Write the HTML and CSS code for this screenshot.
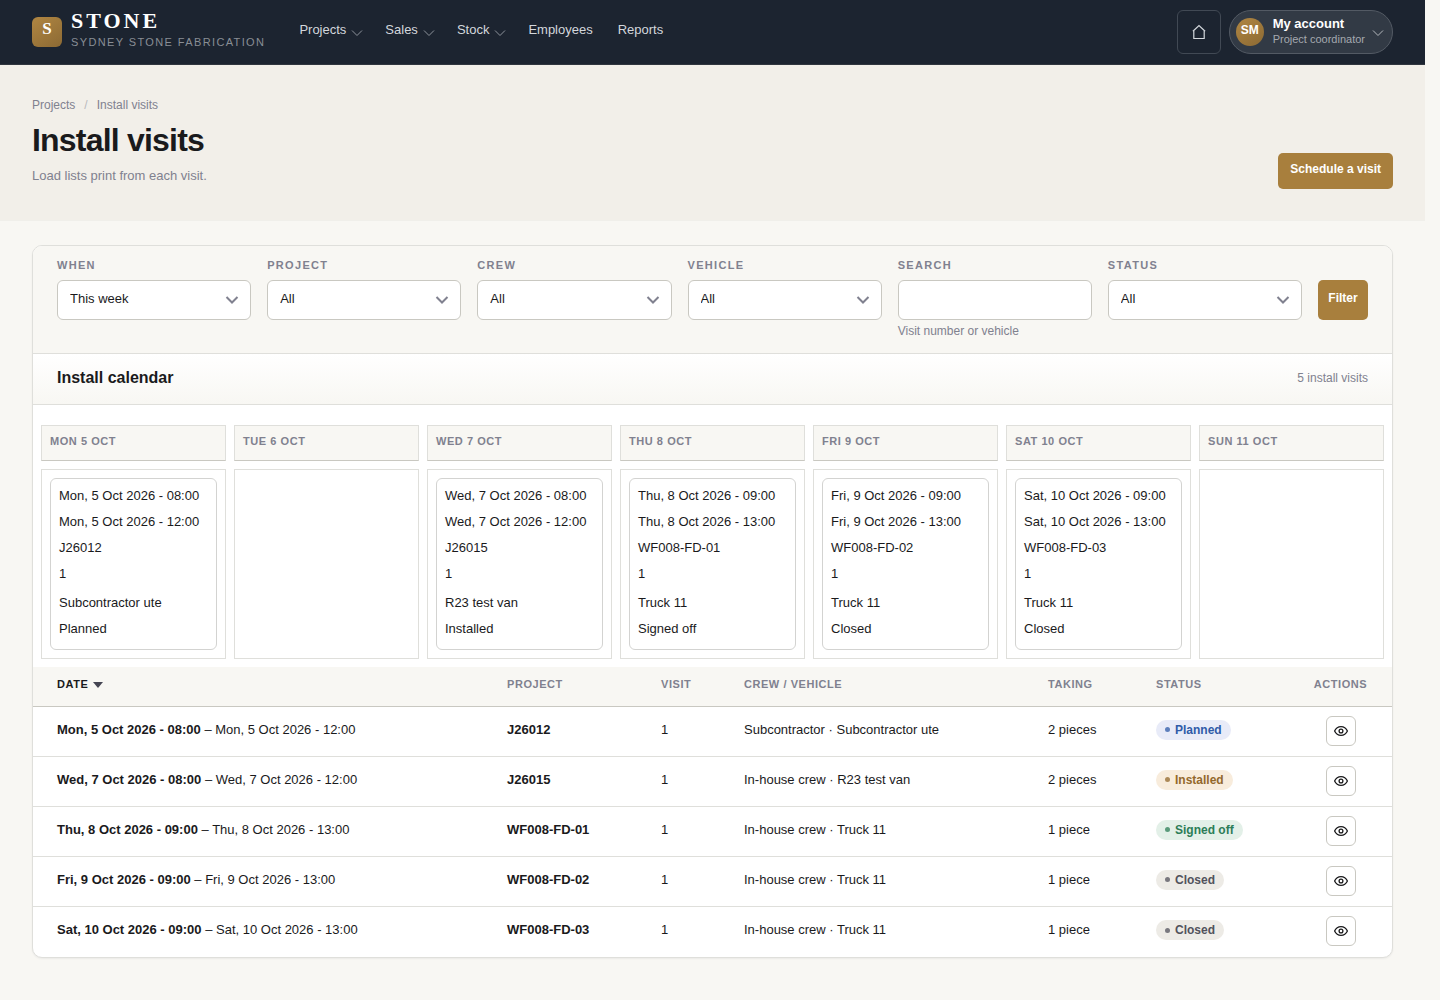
FILE: index.html
```html
<!DOCTYPE html>
<html lang="en">
<head>
<meta charset="utf-8">
<meta name="viewport" content="width=device-width, initial-scale=1">
<title>Install visits</title>
<link rel="stylesheet" href="styles.css">
</head>
<body>
<svg class="sprite" aria-hidden="true">
  <symbol id="chevron" viewBox="0 0 12 12"><path d="M1 3.5l5 5 5-5"/></symbol>
  <symbol id="home" viewBox="0 0 16 16"><path d="M2.8 6.200v8.300h10.400V6.200M1.900 7.300L8 1.600l6.100 5.700"/></symbol>
  <symbol id="eye" viewBox="0 0 16 16"><path d="M1.600 8s2-4.300 6.400-4.300S14.400 8 14.400 8s-2 4.300-6.400 4.300S1.600 8 1.600 8z"/><circle cx="8" cy="8" r="1.900"/></symbol>
</svg>

<header class="topbar">
  <a class="brand" href="#">
    <span class="brand-mark">S</span>
    <span class="brand-text">
      <span class="brand-name">STONE</span>
      <span class="brand-tag">SYDNEY STONE FABRICATION</span>
    </span>
  </a>
  <nav class="nav" aria-label="Main">
    <button class="nav-item nav-menu" type="button">Projects<svg class="nav-chevron"><use href="#chevron"/></svg></button>
    <button class="nav-item nav-menu" type="button">Sales<svg class="nav-chevron"><use href="#chevron"/></svg></button>
    <button class="nav-item nav-menu" type="button">Stock<svg class="nav-chevron"><use href="#chevron"/></svg></button>
    <a class="nav-item" href="#">Employees</a>
    <a class="nav-item" href="#">Reports</a>
  </nav>
  <div class="topbar-end">
    <a class="home" href="#" aria-label="Home"><svg class="home-icon"><use href="#home"/></svg></a>
    <button class="account" type="button">
      <span class="avatar">SM</span>
      <span class="account-text">
        <span class="account-name">My account</span>
        <span class="account-role">Project coordinator</span>
      </span>
      <svg class="account-chevron"><use href="#chevron"/></svg>
    </button>
  </div>
</header>

<section class="hero">
  <div>
    <nav class="crumbs" aria-label="Breadcrumb"><a href="#">Projects</a><span class="crumb-sep">/</span><span>Install visits</span></nav>
    <h1 class="title">Install visits</h1>
    <p class="subtitle">Load lists print from each visit.</p>
  </div>
  <button class="btn btn-hero" type="button">Schedule a visit</button>
</section>

<main class="main">
  <div class="card">
    <form class="filters">
      <div class="field">
        <label class="label" for="when">When</label>
        <select class="control select" id="when"><option>This week</option></select>
      </div>
      <div class="field">
        <label class="label" for="project">Project</label>
        <select class="control select" id="project"><option>All</option></select>
      </div>
      <div class="field">
        <label class="label" for="crew">Crew</label>
        <select class="control select" id="crew"><option>All</option></select>
      </div>
      <div class="field">
        <label class="label" for="vehicle">Vehicle</label>
        <select class="control select" id="vehicle"><option>All</option></select>
      </div>
      <div class="field">
        <label class="label" for="search">Search</label>
        <input class="control" id="search" type="text" aria-describedby="search-help">
        <small class="help" id="search-help">Visit number or vehicle</small>
      </div>
      <div class="field">
        <label class="label" for="status">Status</label>
        <select class="control select" id="status"><option>All</option></select>
      </div>
      <button class="btn btn-filter" type="button">Filter</button>
    </form>

    <div class="section-head">
      <h2 class="section-title">Install calendar</h2>
      <span class="section-count">5 install visits</span>
    </div>

    <table class="calendar">
      <thead>
        <tr><th>Mon 5 Oct</th><th>Tue 6 Oct</th><th>Wed 7 Oct</th><th>Thu 8 Oct</th><th>Fri 9 Oct</th><th>Sat 10 Oct</th><th>Sun 11 Oct</th></tr>
      </thead>
      <tbody>
        <tr>
          <td><a class="event" href="#"><span>Mon, 5 Oct 2026 - 08:00</span><span>Mon, 5 Oct 2026 - 12:00</span><span>J26012</span><span>1</span><span class="event-vehicle">Subcontractor ute</span><span>Planned</span></a></td>
          <td></td>
          <td><a class="event" href="#"><span>Wed, 7 Oct 2026 - 08:00</span><span>Wed, 7 Oct 2026 - 12:00</span><span>J26015</span><span>1</span><span class="event-vehicle">R23 test van</span><span>Installed</span></a></td>
          <td><a class="event" href="#"><span>Thu, 8 Oct 2026 - 09:00</span><span>Thu, 8 Oct 2026 - 13:00</span><span>WF008-FD-01</span><span>1</span><span class="event-vehicle">Truck 11</span><span>Signed off</span></a></td>
          <td><a class="event" href="#"><span>Fri, 9 Oct 2026 - 09:00</span><span>Fri, 9 Oct 2026 - 13:00</span><span>WF008-FD-02</span><span>1</span><span class="event-vehicle">Truck 11</span><span>Closed</span></a></td>
          <td><a class="event" href="#"><span>Sat, 10 Oct 2026 - 09:00</span><span>Sat, 10 Oct 2026 - 13:00</span><span>WF008-FD-03</span><span>1</span><span class="event-vehicle">Truck 11</span><span>Closed</span></a></td>
          <td></td>
        </tr>
      </tbody>
    </table>

    <table class="visits">
      <colgroup><col class="c-date"><col class="c-project"><col class="c-visit"><col class="c-crew"><col class="c-taking"><col class="c-status"><col class="c-actions"></colgroup>
      <thead>
        <tr><th class="sorted" aria-sort="descending">Date<span class="sort-arrow"></span></th><th>Project</th><th>Visit</th><th>Crew / vehicle</th><th>Taking</th><th>Status</th><th class="actions">Actions</th></tr>
      </thead>
      <tbody>
        <tr><td><b>Mon, 5 Oct 2026 - 08:00</b> – Mon, 5 Oct 2026 - 12:00</td><td><b>J26012</b></td><td>1</td><td>Subcontractor · Subcontractor ute</td><td>2 pieces</td><td><span class="pill pill-planned">Planned</span></td><td class="actions"><button class="view" type="button" aria-label="View visit"><svg class="view-icon"><use href="#eye"/></svg></button></td></tr>
        <tr><td><b>Wed, 7 Oct 2026 - 08:00</b> – Wed, 7 Oct 2026 - 12:00</td><td><b>J26015</b></td><td>1</td><td>In-house crew · R23 test van</td><td>2 pieces</td><td><span class="pill pill-installed">Installed</span></td><td class="actions"><button class="view" type="button" aria-label="View visit"><svg class="view-icon"><use href="#eye"/></svg></button></td></tr>
        <tr><td><b>Thu, 8 Oct 2026 - 09:00</b> – Thu, 8 Oct 2026 - 13:00</td><td><b>WF008-FD-01</b></td><td>1</td><td>In-house crew · Truck 11</td><td>1 piece</td><td><span class="pill pill-signed">Signed off</span></td><td class="actions"><button class="view" type="button" aria-label="View visit"><svg class="view-icon"><use href="#eye"/></svg></button></td></tr>
        <tr><td><b>Fri, 9 Oct 2026 - 09:00</b> – Fri, 9 Oct 2026 - 13:00</td><td><b>WF008-FD-02</b></td><td>1</td><td>In-house crew · Truck 11</td><td>1 piece</td><td><span class="pill pill-closed">Closed</span></td><td class="actions"><button class="view" type="button" aria-label="View visit"><svg class="view-icon"><use href="#eye"/></svg></button></td></tr>
        <tr><td><b>Sat, 10 Oct 2026 - 09:00</b> – Sat, 10 Oct 2026 - 13:00</td><td><b>WF008-FD-03</b></td><td>1</td><td>In-house crew · Truck 11</td><td>1 piece</td><td><span class="pill pill-closed">Closed</span></td><td class="actions"><button class="view" type="button" aria-label="View visit"><svg class="view-icon"><use href="#eye"/></svg></button></td></tr>
      </tbody>
    </table>
  </div>
</main>
</body>
</html>
```
FILE: styles.css
```css
:root {
  --navy: #1c2430;
  --gold: #a87f3d;
  --paper: #f8f7f3;
  --sand: #f2efe9;
  --ink: #1a1a1c;
  --muted: #80818f;
  --line: #dfdfdb;
  --line-strong: #c9c8c1;
}

* { box-sizing: border-box; }

body {
  margin: 0;
  padding-right: 15px;
  background: var(--paper);
  color: var(--ink);
  font-family: "Liberation Sans", Arial, sans-serif;
  font-size: 13px;
  line-height: 20px;
}

a { color: inherit; text-decoration: none; }
button, input, select { font: inherit; color: inherit; }
svg { fill: none; stroke: currentColor; }
.sprite { display: none; }

/* Top bar */
.topbar {
  display: flex;
  align-items: center;
  height: 65px;
  padding: 0 32px;
  background: var(--navy);
  border-bottom: 1px solid #30363f;
  color: #d3d7dc;
}
.brand { display: flex; align-items: center; gap: 9px; margin-right: 34px; }
.brand-mark {
  width: 30px;
  height: 30px;
  border-radius: 6px;
  background: linear-gradient(145deg, #b08642, #8c6a34);
  color: #fff;
  font: bold 17px/24px "Liberation Serif", serif;
  text-align: center;
}
.brand-text { display: flex; flex-direction: column; padding-bottom: 4px; }
.brand-name { color: #fff; font: bold 22px/24px "Liberation Serif", serif; letter-spacing: 3px; }
.brand-tag { color: #898e95; font-size: 11px; line-height: 18px; letter-spacing: 0.125em; }
.nav { display: flex; gap: 25px; padding-bottom: 5px; }
.nav-item {
  display: flex;
  align-items: center;
  gap: 5px;
  padding: 0;
  border: 0;
  background: none;
}
.nav-menu { margin-right: -3px; }
.nav-chevron { width: 12px; height: 12px; margin-top: 6px; stroke: #8d939b; }
.topbar-end { display: flex; gap: 8px; margin-left: auto; }
.home {
  display: grid;
  place-items: center;
  width: 44px;
  height: 44px;
  border: 1px solid #414954;
  border-radius: 6px;
}
.home-icon { width: 16px; height: 16px; stroke-width: 1.2; }
.account {
  display: flex;
  align-items: center;
  height: 44px;
  padding: 0 8px 0 6px;
  border: 1px solid #535a64;
  border-radius: 22px;
  background: #323a45;
  text-align: left;
}
.avatar {
  width: 28px;
  height: 28px;
  margin-right: 9px;
  border-radius: 50%;
  background: linear-gradient(145deg, #b08642, #8c6a34);
  color: #fff;
  font-size: 12px;
  font-weight: bold;
  line-height: 25px;
  text-align: center;
}
.account-text { display: flex; flex-direction: column; padding-bottom: 3px; }
.account-name { color: #fff; font-weight: bold; line-height: 16px; }
.account-role { color: #a5a9af; font-size: 11px; line-height: 14px; }
.account-chevron { width: 12px; height: 12px; margin: 2px 0 0 7px; stroke: #b4b8bd; }

/* Page heading */
.hero {
  display: flex;
  align-items: flex-end;
  justify-content: space-between;
  padding: 32px 32px 31px;
  background: var(--sand);
  border-bottom: 1px solid #f0efea;
}
.crumbs { display: flex; gap: 9px; color: var(--muted); font-size: 12px; line-height: 16px; }
.crumb-sep { color: #b9b9bd; }
.title { margin: 7px 0 0; font-size: 32px; line-height: 40px; letter-spacing: -0.025em; }
.subtitle { margin: 6px 0 3px; color: var(--muted); }

.btn {
  border: 0;
  border-radius: 5px;
  background: var(--gold);
  color: #fff;
  font-size: 12px;
  font-weight: bold;
  line-height: 16px;
}
.btn-hero { height: 36px; padding: 0 12px 4px; }

/* Card and filters */
.main { padding: 24px 32px; }
.card {
  overflow: hidden;
  border: 1px solid var(--line);
  border-radius: 10px;
  background: #fff;
  box-shadow: 0 1px 2px rgba(28, 36, 48, 0.06);
}
.filters {
  display: flex;
  align-items: flex-start;
  gap: 16px;
  padding: 12px 24px 14px;
  background: var(--paper);
  border-bottom: 1px solid var(--line);
}
.field { flex: 1; min-width: 0; display: flex; flex-direction: column; }
.label {
  margin-bottom: 8px;
  color: var(--muted);
  font-size: 11px;
  font-weight: bold;
  line-height: 14px;
  letter-spacing: 0.12em;
  text-transform: uppercase;
}
.control {
  width: 100%;
  height: 40px;
  padding: 0 12px 2px;
  border: 1px solid var(--line-strong);
  border-radius: 6px;
  background: #fff;
}
.select {
  appearance: none;
  background: #fff url("data:image/svg+xml,%3Csvg xmlns='http://www.w3.org/2000/svg' viewBox='0 0 14 14' fill='none' stroke='%2380818f' stroke-width='2'%3E%3Cpath d='M1.500 4L7 9.500l5.500-5.500'/%3E%3C/svg%3E") right 11px center / 14px 14px no-repeat;
}
.help { padding-top: 3px; color: var(--muted); font-size: 12px; line-height: 16px; }
.btn-filter { width: 50px; height: 40px; margin-top: 22px; padding: 0 0 4px; }

.section-head {
  display: flex;
  align-items: center;
  justify-content: space-between;
  height: 51px;
  padding: 0 24px 3px;
  background: linear-gradient(#fff, var(--paper));
  border-bottom: 1px solid var(--line);
}
.section-title { margin: 0; font-size: 16px; line-height: 20px; }
.section-count { color: var(--muted); font-size: 12px; }

/* Week calendar */
.calendar {
  width: 100%;
  margin-top: 12px;
  border-collapse: separate;
  border-spacing: 8px;
  table-layout: fixed;
}
.calendar th, .visits th {
  color: var(--muted);
  font-size: 11px;
  line-height: 14px;
  letter-spacing: 0.05em;
  text-align: left;
  text-transform: uppercase;
  white-space: nowrap;
}
.calendar th {
  height: 36px;
  padding: 0 8px 4px;
  background: var(--paper);
  border: 1px solid var(--line);
  border-bottom-color: var(--line-strong);
}
.calendar td { height: 190px; padding: 8px; border: 1px solid var(--line); vertical-align: top; }
.event {
  display: flex;
  flex-direction: column;
  gap: 6px;
  padding: 7px 8px 10px;
  border: 1px solid #d3d3d1;
  border-radius: 6px;
  white-space: nowrap;
}
.event-vehicle { margin-top: 3px; }

/* Visit table */
.visits { width: 100%; margin-bottom: 1px; border-collapse: collapse; table-layout: fixed; }
.c-date { width: 462px; }
.c-project { width: 154px; }
.c-visit { width: 83px; }
.c-crew { width: 304px; }
.c-taking { width: 108px; }
.c-status { width: 157px; }
.c-actions { width: 91px; }
.visits th { height: 39px; padding: 0 12px 4px; background: var(--paper); border-bottom: 1px solid var(--line-strong); }
.visits td { height: 50px; padding: 0 12px 3px; }
.visits tr + tr td { border-top: 1px solid var(--line); }
.visits th:first-child, .visits td:first-child { padding-left: 24px; }
.visits .actions { padding-right: 24px; text-align: center; }
.visits td.actions { padding-bottom: 0; }
.visits .sorted { color: var(--ink); }
.sort-arrow {
  display: inline-block;
  margin-left: 5px;
  border: 5px solid transparent;
  border-top: 6px solid #454552;
  border-bottom: 0;
}
.pill {
  display: inline-flex;
  align-items: center;
  gap: 5px;
  height: 20px;
  padding: 0 9px;
  border-radius: 10px;
  font-size: 12px;
  font-weight: bold;
  vertical-align: middle;
}
.pill::before { content: ""; width: 5px; height: 5px; border-radius: 50%; background: currentColor; opacity: 0.75; }
.pill-planned { background: #e8ebf8; color: #2f5ba8; }
.pill-installed { background: #f8ecdc; color: #93682c; }
.pill-signed { background: #e3f0e8; color: #2c7d57; }
.pill-closed { background: #edebe6; color: #52525c; }
.view {
  display: inline-grid;
  place-items: center;
  width: 30px;
  height: 30px;
  padding: 0;
  border: 1px solid var(--line-strong);
  border-radius: 6px;
  background: #fff;
  vertical-align: middle;
}
.view-icon { width: 16px; height: 16px; stroke-width: 1.3; }
```
